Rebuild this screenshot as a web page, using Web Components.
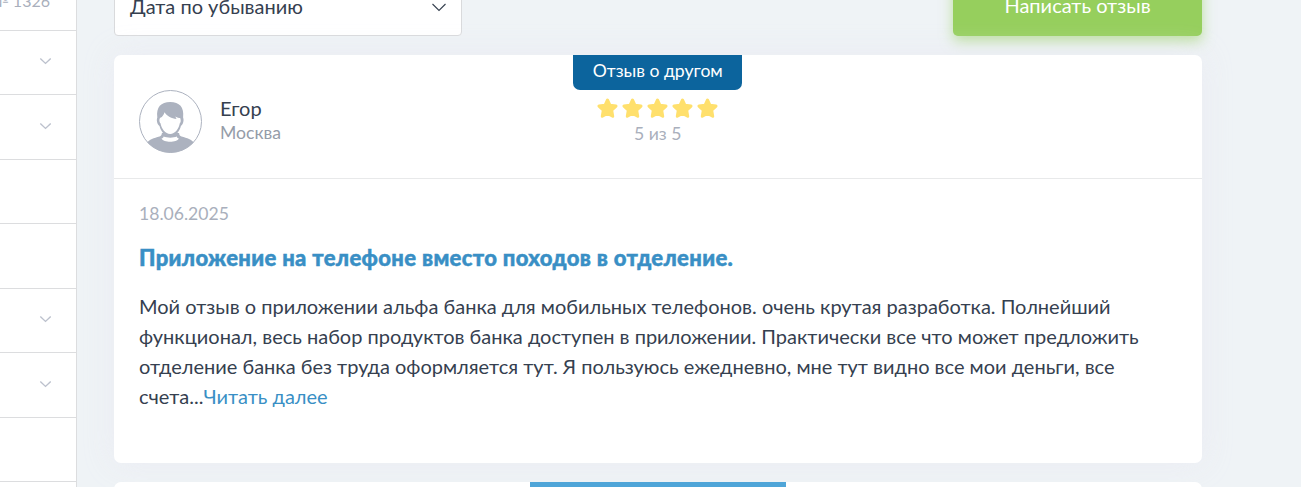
<!DOCTYPE html>
<html lang="ru">
<head>
<meta charset="utf-8">
<title>Отзывы</title>
<style>
  * { box-sizing: border-box; }
  body {
    margin: 0;
    height: 487px;
    overflow: hidden;
    background: #eff3f6;
    color: #35404f;
    font: 20px/30px Lato, "Open Sans", sans-serif;
  }
</style>
</head>
<body>
<reviews-page>
  <side-menu slot="side">
    <side-item class="first">№ 1326</side-item>
    <side-item arrow></side-item>
    <side-item arrow></side-item>
    <side-item></side-item>
    <side-item></side-item>
    <side-item arrow></side-item>
    <side-item arrow></side-item>
    <side-item></side-item>
    <side-item></side-item>
  </side-menu>
  <reviews-toolbar>
    <sort-select>Дата по убыванию</sort-select>
    <action-button>Написать отзыв</action-button>
  </reviews-toolbar>
  <review-card rating="5">
    <span slot="badge">Отзыв о другом</span>
    <span slot="name">Егор</span>
    <span slot="city">Москва</span>
    <span slot="date">18.06.2025</span>
    <span slot="title">Приложение на телефоне вместо походов в отделение.</span>
    Мой отзыв о приложении альфа банка для мобильных телефонов. очень крутая разработка. Полнейший<br>функционал, весь набор продуктов банка доступен в приложении. Практически все что может предложить<br>отделение банка без труда оформляется тут. Я пользуюсь ежедневно, мне тут видно все мои деньги, все<br>счета...<read-more>Читать далее</read-more>
  </review-card>
  <next-card></next-card>
</reviews-page>

<script>
class ReviewsPage extends HTMLElement {
  constructor() {
    super();
    this.attachShadow({ mode: 'open' });
    this.shadowRoot.innerHTML = `
    <style>
        :host {
            display: flex;
            height: 487px;
            overflow: hidden;
        }

        main {
            display: flex;
            flex-direction: column;
            gap: 19px;
            width: 1088px;
            margin: -24px 0 0 37px;
        }
    </style>
    <slot name="side"></slot>
    <main><slot></slot></main>`;
  }
}

class SideMenu extends HTMLElement {
  constructor() {
    super();
    this.attachShadow({ mode: 'open' });
    this.shadowRoot.innerHTML = `
    <style>
        :host {
            box-sizing: border-box;
            display: flex;
            flex-direction: column;
            flex: none;
            width: 77px;
            height: 487px;
            overflow: hidden;
            background: #fff;
            border-right: 1px solid #dcdddf;
        }
    </style>
    <slot></slot>`;
  }
}

class SideItem extends HTMLElement {
  constructor() {
    super();
    this.attachShadow({ mode: 'open' });
    const arrow = this.hasAttribute('arrow')
      ? '<svg width="12" height="8" viewBox="0 0 12 8"><path d="M1.300 1.500 6.500 6.400l5.200-4.900"/></svg>'
      : '';
    this.shadowRoot.innerHTML = `
    <style>
        :host {
            box-sizing: border-box;
            display: flex;
            flex: none;
            align-items: center;
            justify-content: flex-end;
            height: 64.5px;
            padding: 0 25px 2.5px 0;
            border-bottom: 1px solid #dcdddf;
            color: #a9afbc;
            font-size: 16px;
            white-space: nowrap;
        }

        :host(.first) {
            margin-top: -33.8px;
            padding: 6px 26px 0 0;
        }

        svg {
            display: block;
            fill: none;
            stroke: #bcc1cd;
            stroke-width: 1.4;
        }
    </style>
    <slot></slot>${arrow}`;
  }
}

class ReviewsToolbar extends HTMLElement {
  constructor() {
    super();
    this.attachShadow({ mode: 'open' });
    this.shadowRoot.innerHTML = `
    <style>
        :host {
            display: flex;
            flex: none;
            justify-content: space-between;
            height: 60px;
        }
    </style>
    <slot></slot>`;
  }
}

class SortSelect extends HTMLElement {
  constructor() {
    super();
    this.attachShadow({ mode: 'open' });
    this.shadowRoot.innerHTML = `
    <style>
        :host {
            box-sizing: border-box;
            display: flex;
            align-items: center;
            justify-content: space-between;
            width: 348px;
            padding: 0 15px 0 15px;
            background: #fff;
            border: 1px solid #d9dadc;
            border-radius: 4px;
        }

        svg {
            margin-top: 3px;
            fill: none;
            stroke: #35404f;
            stroke-width: 1.1;
        }
    </style>
    <span><slot></slot></span>
    <svg width="14" height="9" viewBox="0 0 14 9"><path d="M.5 1 7 7.500 13.500 1"/></svg>`;
  }
}

class ActionButton extends HTMLElement {
  constructor() {
    super();
    this.attachShadow({ mode: 'open' });
    this.shadowRoot.innerHTML = `
    <style>
        :host {
            box-sizing: border-box;
            display: flex;
            align-items: center;
            justify-content: center;
            width: 249px;
            padding-bottom: 2px;
            background: #96cf5d;
            border-radius: 5px;
            box-shadow: 0 6px 13px rgba(150, 207, 93, .55);
            color: #fff;
        }
    </style>
    <span><slot></slot></span>`;
  }
}

class StarRating extends HTMLElement {
  constructor() {
    super();
    this.attachShadow({ mode: 'open' });
  }

  connectedCallback() {
    const count = Number(this.getAttribute('value'));
    const star = '<svg width="21" height="20" viewBox="0 0 21 20"><path d="m10.500 2 2.500 5.300 6 .8-4.300 4.200 1 6-5.200-2.800-5.200 2.800 1-6L2 8.100l6-.8z"/></svg>';
    this.shadowRoot.innerHTML = `
    <style>
        :host {
            display: flex;
            gap: 4px;
            height: 20px;
        }

        svg {
            fill: #ffe06d;
            stroke: #ffe06d;
            stroke-width: 3;
            stroke-linejoin: round;
        }
    </style>
    ${star.repeat(count)}`;
  }
}

class UserAvatar extends HTMLElement {
  constructor() {
    super();
    this.attachShadow({ mode: 'open' });
    this.shadowRoot.innerHTML = `
    <style>
        :host {
            display: block;
            width: 63px;
            height: 63px;
        }

        svg {
            display: block;
        }
    </style>
    <svg width="63" height="63" viewBox="0 0 63 63">
      <clipPath id="round"><circle cx="31.5" cy="31.5" r="31.2"/></clipPath>
      <g clip-path="url(#round)" fill="#acb2bf">
        <path d="M8 53c2-3.500 7-5 12.500-6.500 1.600-.6 2.300-1.400 2.400-3.500h17.200c.1 2.100.8 2.900 2.400 3.500C48 48 53 49.500 55 53v10H8z"/>
        <path d="M18.300 27.500C17 17 22 12 31.200 12s14.200 5 12.900 15.500c1.200 3-.1 7-2.200 8.500-1.200 5-5.200 10.500-10.700 10.500S21.700 41 20.500 36c-2.100-1.500-3.400-5.500-2.200-8.500z"/>
        <path fill="#fff" d="M21.300 27.800c2.200-.8 3.600-3.200 4.200-5.500 2.800 4.200 7 6.200 12 6.600l-1.200-2.400c2 1.300 3.700 1.500 4.700 1.500.8.600 1.200 4.500-.2 5.200-.9 5.300-4.800 10.800-9.600 10.800s-8.800-5.500-9.700-10.800c-1.400-.7-1.400-4.700-.2-5.400z"/>
        <path fill="#fff" d="M22.500 48.500c1.300-.3 2-.9 2.100-2 3.400 1.500 10 1.500 13.200 0 .1 1.100.8 1.700 2.100 2-2.200 4.300-15.200 4.300-17.400 0z"/>
      </g>
      <circle cx="31.500" cy="31.500" r="31" fill="none" stroke="#acb2bf"/>
    </svg>`;
  }
}

class ReviewCard extends HTMLElement {
  constructor() {
    super();
    this.attachShadow({ mode: 'open' });
    const rating = this.getAttribute('rating');
    this.shadowRoot.innerHTML = `
    <style>
        :host {
            display: flex;
            flex: none;
            flex-direction: column;
            height: 408px;
            background: #fff;
            border-radius: 7px;
            box-shadow: 0 0 30px rgba(234, 234, 242, .8);
        }

        header {
            box-sizing: border-box;
            display: grid;
            grid-template-columns: 1fr auto 1fr;
            height: 124px;
            padding: 0 25.500px 0 25px;
            border-bottom: 1px solid #e8e9ea;
        }

        .user {
            display: flex;
            align-items: flex-start;
            gap: 18px;
            padding-top: 35px;
        }

        .names {
            padding-top: 6px;
            line-height: 24px;
        }

        .city {
            padding-top: 1px;
            color: #959ca8;
            font-size: 17.6px;
        }

        .score {
            display: flex;
            flex-direction: column;
            align-items: center;
            color: #a9afbc;
            font-size: 17.6px;
            line-height: 24px;
        }

        .badge {
            box-sizing: border-box;
            width: 169px;
            height: 35px;
            margin-bottom: 8px;
            background: #0c649d;
            border-radius: 0 0 7px 7px;
            color: #fff;
            line-height: 32px;
            text-align: center;
            white-space: nowrap;
        }

        .score > span {
            margin-top: 4px;
        }

        .body {
            padding: 20px 25px 0;
            white-space: nowrap;
        }

        .date {
            color: #a9afbc;
            font-size: 17.6px;
        }

        h3 {
            margin: 14px 0 18px;
            color: #398fc5;
            font-size: 22px;
            font-weight: 900;
            letter-spacing: .34px;
            line-height: 30px;
            -webkit-text-stroke: .5px #398fc5;
        }
    </style>
    <header>
      <div class="user">
        <user-avatar></user-avatar>
        <div class="names">
          <div class="name"><slot name="name"></slot></div>
          <div class="city"><slot name="city"></slot></div>
        </div>
      </div>
      <div class="score">
        <div class="badge"><slot name="badge"></slot></div>
        <star-rating value="${rating}"></star-rating>
        <span>${rating} из 5</span>
      </div>
    </header>
    <div class="body">
      <div class="date"><slot name="date"></slot></div>
      <h3><slot name="title"></slot></h3>
      <div class="text"><slot></slot></div>
    </div>`;
  }
}

class ReadMore extends HTMLElement {
  constructor() {
    super();
    this.attachShadow({ mode: 'open' });
    // no whitespace before the slot, the link sticks to the dots
    this.shadowRoot.innerHTML = `<style>
        :host {
            display: inline;
            margin-left: .1px;
            color: #398fc5;
            cursor: pointer;
        }
    </style><slot></slot>`;
  }
}

class NextCard extends HTMLElement {
  constructor() {
    super();
    this.attachShadow({ mode: 'open' });
    this.shadowRoot.innerHTML = `
    <style>
        :host {
            display: flex;
            flex: none;
            justify-content: center;
            height: 60px;
            background: #fff;
            border-radius: 7px;
        }

        div {
            width: 256px;
            height: 35px;
            background: #4fa5d8;
        }
    </style>
    <div></div>`;
  }
}

customElements.define('reviews-page', ReviewsPage);
customElements.define('side-menu', SideMenu);
customElements.define('side-item', SideItem);
customElements.define('reviews-toolbar', ReviewsToolbar);
customElements.define('sort-select', SortSelect);
customElements.define('action-button', ActionButton);
customElements.define('star-rating', StarRating);
customElements.define('user-avatar', UserAvatar);
customElements.define('review-card', ReviewCard);
customElements.define('read-more', ReadMore);
customElements.define('next-card', NextCard);
</script>
</body>
</html>
